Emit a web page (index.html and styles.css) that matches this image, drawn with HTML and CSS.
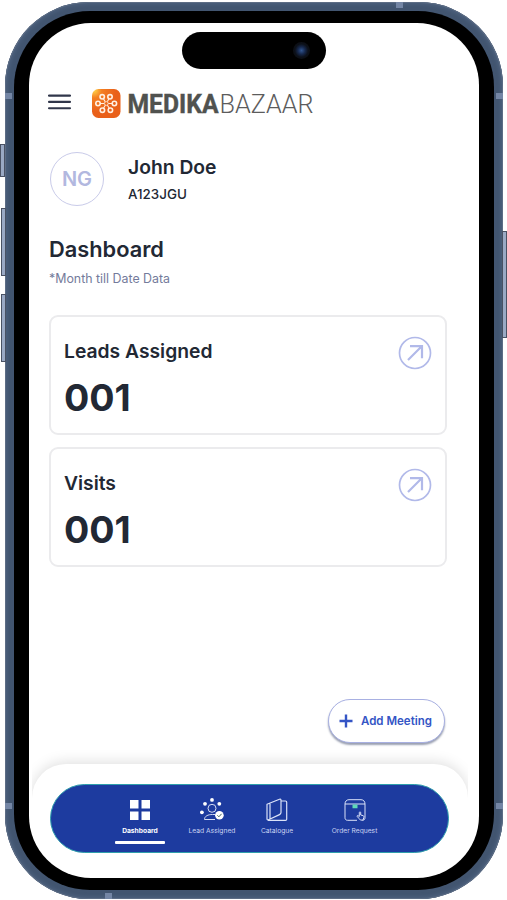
FILE: index.html
```html
<!DOCTYPE html>
<html lang="en">
  <head>
    <meta charset="UTF-8" />
    <meta name="viewport" content="width=device-width, initial-scale=1.0" />
    <title>Medikabazaar Dashboard</title>
    <link rel="stylesheet" href="styles.css">
  </head>
  <body>
    <div class="phone">
      <span class="side-button mute"></span>
      <span class="side-button volume-up"></span>
      <span class="side-button volume-down"></span>
      <span class="side-button power"></span>
      <span class="antenna top"></span>
      <span class="antenna bottom"></span>
      <span class="antenna left upper"></span>
      <span class="antenna right upper"></span>
      <span class="antenna left lower"></span>
      <span class="antenna right lower"></span>

      <div class="bezel">
        <div class="screen">
          <div class="island"><span class="camera"></span></div>

          <header class="header">
            <svg class="menu" width="23" height="16" viewBox="0 0 23 16">
              <path d="M1 1.600h21M1 7.900h21M1 14.200h21" />
            </svg>
            <svg class="logo" width="224" height="30" viewBox="0 0 224 30">
              <defs>
                <radialGradient id="orange" cx="0.08" cy="0.05" r="0.75">
                  <stop offset="0" stop-color="#ffd34a" />
                  <stop offset="0.35" stop-color="#f47f22" />
                  <stop offset="1" stop-color="#e9601a" />
                </radialGradient>
              </defs>
              <rect x="0" y="0" width="28.5" height="29" rx="6.5" fill="url(#orange)" />
              <g fill="none" stroke="#fff0e2" stroke-width="1.6">
                <circle cx="10.2" cy="7.8" r="2.2" />
                <circle cx="18" cy="7.8" r="2.2" />
                <circle cx="22.4" cy="14.5" r="2.2" />
                <circle cx="18.4" cy="21.2" r="2.2" />
                <circle cx="10.4" cy="21.2" r="2.2" />
                <circle cx="6" cy="14.5" r="2.2" />
                <circle cx="14.3" cy="14.5" r="1.9" stroke="#ffd9bd" stroke-width="1" />
                <path stroke-width="1.1" d="M11.4 9.800l1.800 2.800M16.900 9.800l-1.500 2.800M20.200 14.500h-3.800M17.300 19.300l-1.900-3M11.500 19.300l1.800-3M8.200 14.500h4" />
              </g>
              <text class="logo-bold" x="35.5" y="23.5" textLength="91" lengthAdjust="spacingAndGlyphs">MEDIKA</text>
              <text class="logo-light" x="127.5" y="23.5" textLength="94" lengthAdjust="spacingAndGlyphs">BAZAAR</text>
            </svg>
          </header>

          <section class="profile">
            <div class="avatar">NG</div>
            <div>
              <div class="name">John Doe</div>
              <div class="code">A123JGU</div>
            </div>
          </section>

          <main class="content">
            <h1 class="title">Dashboard</h1>
            <p class="subtitle">*Month till Date Data</p>

            <div class="card">
              <div>
                <div class="card-label">Leads Assigned</div>
                <div class="card-value">001</div>
              </div>
              <svg class="card-link" width="34" height="34" viewBox="0 0 34 34">
                <circle cx="17" cy="17" r="15.5" />
                <path d="M10 24L24 10M12 10.2h12v12" />
              </svg>
            </div>

            <div class="card">
              <div>
                <div class="card-label">Visits</div>
                <div class="card-value">001</div>
              </div>
              <svg class="card-link" width="34" height="34" viewBox="0 0 34 34">
                <circle cx="17" cy="17" r="15.5" />
                <path d="M10 24L24 10M12 10.2h12v12" />
              </svg>
            </div>
          </main>

          <button class="add-meeting">
            <svg width="14" height="14" viewBox="0 0 14 14">
              <path d="M7 0.5v13M0.5 7h13" />
            </svg>
            Add Meeting
          </button>

          <div class="sheet-area">
            <div class="sheet"></div>
            <nav class="navbar">
              <a class="nav-item active">
                <svg width="24" height="24" viewBox="0 0 24 24">
                  <path fill="#fff" d="M2 2h8.5v8.5H2zM13.5 2H22v8.5h-8.5zM2 13.5h8.5V22H2zM13.5 13.5H22V22h-8.5z" />
                </svg>
                <span>Dashboard</span>
              </a>
              <a class="nav-item">
                <svg width="24" height="24" viewBox="0 0 24 24">
                  <g fill="#fff">
                    <circle cx="1.9" cy="14.3" r="1.9" />
                    <circle cx="5" cy="5.8" r="1.9" />
                    <circle cx="12" cy="1.9" r="1.9" />
                    <circle cx="19.3" cy="5.8" r="1.9" />
                  </g>
                  <g fill="none" stroke="#d5dcf3">
                    <circle cx="12" cy="10.3" r="4" />
                    <path d="M15 21.5H4.5c0-3.5 3.5-5 8-5h3" />
                  </g>
                  <circle cx="19.4" cy="17.3" r="4.3" fill="#fff" />
                  <path d="M17.4 17.3l1.5 1.5 2.7-3" fill="none" stroke="#465" />
                </svg>
                <span>Lead Assigned</span>
              </a>
              <a class="nav-item">
                <svg width="24" height="24" viewBox="0 0 24 24">
                  <g fill="none" stroke="#dbe2f8" stroke-width="1.2" stroke-linejoin="round">
                    <path d="M2 6.200L14.500 1.200c1-.3 1.500.2 1.500 1.200v12.200c0 1-.5 1.500-1.500 2L3.500 21.800c-1 .4-1.500 0-1.500-1zM5 5v16" />
                    <path d="M16 3h4.500c.8 0 1.200.5 1.200 1.200v17c0 .7-.4 1.200-1.200 1.200H3" />
                  </g>
                </svg>
                <span>Catalogue</span>
              </a>
              <a class="nav-item">
                <svg width="24" height="24" viewBox="0 0 24 24">
                  <g fill="none" stroke="#dbe2f8" stroke-linejoin="round">
                    <path d="M14 22.300H4.500c-1.500 0-2.500-1-2.500-2.500V6c0-2.500 1.500-4.300 4-4.300h12c2.500 0 4 1.800 4 4.300v13.800c0 1.500-1 2.500-2.500 2.500M2 6h20" />
                    <path d="M16 20.500l-1.800-2c-.5-.8.500-1.300 1.100-.7l1 .8v-4c0-1 1.400-1 1.400 0v2.400l2.300.6c1 .3 1 1 .8 2l-.8 2.500h-2.500z" />
                  </g>
                  <path d="M9.500 6.500h5v3.800h-5z" fill="#5fd9b8" />
                </svg>
                <span>Order Request</span>
              </a>
            </nav>
          </div>
        </div>
      </div>
    </div>
  </body>
</html>
```

FILE: styles.css
```css
* {
  margin: 0;
  padding: 0;
  box-sizing: border-box;
}

body {
  font-family: Inter, sans-serif;
  background-color: #ffffff;
  color: #222834;
  height: 900px;
  overflow: hidden;
}

/* phone frame */

.phone {
  position: relative;
  width: 498px;
  height: 897px;
  margin: 2px 0 0 5px;
  padding: 9px;
  border-radius: 84px;
  background-color: #425570;
  box-shadow: inset 0 0 0 1px #5d6d85, inset 0 0 3px 3px #4a5e7a;
}

.bezel {
  height: 100%;
  padding: 11.5px 15px 12px;
  border-radius: 76px;
  background-color: #000000;
}

.screen {
  position: relative;
  display: flex;
  flex-direction: column;
  height: 100%;
  border-radius: 62px;
  background-color: #ffffff;
  overflow: hidden;
}

.side-button {
  position: absolute;
  width: 5px;
  border: 1px solid #4a5264;
  background-color: #9aa9c4;
}

.mute {
  left: -5px;
  top: 142px;
  height: 33px;
}

.volume-up {
  left: -4px;
  top: 206px;
  height: 68px;
}

.volume-down {
  left: -4px;
  top: 292px;
  height: 68px;
}

.power {
  right: -4px;
  top: 229px;
  height: 107px;
}

.antenna {
  position: absolute;
  width: 7px;
  height: 6px;
  background-color: #7486a5;
}

.top {
  left: 391px;
  top: 0;
}

.bottom {
  left: 100px;
  bottom: 0;
}

.left {
  left: 0;
}

.right {
  right: 0;
}

.upper {
  top: 91px;
}

.lower {
  top: 801px;
}

.island {
  position: absolute;
  left: 153px;
  top: 9px;
  width: 144px;
  height: 37px;
  border-radius: 19px;
  background-color: #000000;
}

.camera {
  position: absolute;
  right: 16px;
  top: 10px;
  width: 17px;
  height: 17px;
  border-radius: 50%;
  background: radial-gradient(circle, #31558f 0, #16284d 30%, #0c1018 55%, #0a0b0e 100%);
}

/* header */

.header {
  display: flex;
  align-items: center;
  gap: 21px;
  padding: 66px 0 0 19px;
}

.menu {
  margin-top: -3px;
  fill: none;
  stroke: #30364a;
  stroke-width: 2.1;
  stroke-linecap: round;
}

.logo-bold,
.logo-light {
  font-family: Roboto, sans-serif;
  font-size: 25px;
  fill: #50524f;
}

.logo-bold {
  font-weight: 700;
  stroke: #50524f;
  stroke-width: 0.4;
}

.logo-light {
  font-weight: 300;
  fill: #5c5c5c;
}

.profile {
  display: flex;
  gap: 24px;
  padding: 33px 0 0 21px;
}

.avatar {
  width: 54px;
  height: 54px;
  border: 1px solid #c9cbe9;
  border-radius: 50%;
  color: #b2b8df;
  font-size: 20px;
  font-weight: 600;
  line-height: 53px;
  text-align: center;
}

.name {
  padding-top: 3px;
  font-size: 19.3px;
  font-weight: 600;
  line-height: 24px;
}

.code {
  margin-top: 7px;
  font-size: 13.4px;
  font-weight: 500;
  line-height: 16px;
}

/* dashboard */

.content {
  padding: 29px 32px 0 20px;
}

.title {
  font-size: 21.8px;
  font-weight: 600;
  line-height: 28px;
}

.subtitle {
  margin: 8px 0 28px;
  color: #747b9b;
  font-size: 12.4px;
  line-height: 16px;
}

.card {
  display: flex;
  justify-content: space-between;
  height: 120px;
  margin-bottom: 12px;
  padding: 19px 13px 0;
  border: 2px solid #ebebed;
  border-radius: 9px;
}

.card-label {
  padding-top: 2px;
  font-size: 19.3px;
  font-weight: 600;
  line-height: 26px;
}

.card-value {
  margin-top: 11px;
  font-size: 37.5px;
  font-weight: 700;
  line-height: 46px;
}

.card-link {
  fill: none;
  stroke: #b1b9e9;
  stroke-width: 1.7;
}

.card-link path {
  stroke-width: 2.2;
}

.add-meeting {
  display: flex;
  align-items: center;
  align-self: flex-end;
  gap: 8px;
  width: 117px;
  height: 44px;
  margin: 120px 34px 0 0;
  padding-left: 10px;
  border: 1px solid #a8b0e2;
  border-radius: 23px;
  background-color: #ffffff;
  box-shadow: 0 2px 2px #9aa0b2;
  color: #3455c5;
  font-family: inherit;
  font-size: 11.5px;
  font-weight: 600;
  white-space: nowrap;
}

.add-meeting svg {
  fill: none;
  stroke: #3455c5;
  stroke-width: 2.4;
}

/* bottom navigation */

.sheet-area {
  position: relative;
  margin: auto 11px 0 3px;
  height: 134px;
  padding: 40px 19px 0 18px;
  overflow: hidden;
}

.sheet {
  position: absolute;
  left: 0;
  right: 0;
  top: 20px;
  height: 150px;
  border-radius: 34px 34px 0 0;
  background-color: #ffffff;
  box-shadow: 0 -2px 14px rgba(0, 0, 0, 0.13);
  clip-path: inset(-20px 0 110px 0);
}

.navbar {
  position: relative;
  display: grid;
  grid-template-columns: 72px 72px 58px 97px;
  padding: 13px 0 0 53px;
  height: 69px;
  border: 1px solid #2f9fac;
  border-radius: 35px;
  background-color: #1d3b9f;
}

.nav-item {
  position: relative;
  display: flex;
  flex-direction: column;
  align-items: center;
  gap: 4px;
  color: #c9d3f2;
  font-size: 6.7px;
  line-height: 10px;
  white-space: nowrap;
}

.nav-item.active {
  color: #ffffff;
  font-weight: 700;
}

.nav-item.active::after {
  content: "";
  width: 50px;
  height: 2.5px;
  margin-top: 1px;
  border-radius: 1px;
  background-color: #ffffff;
}
```
